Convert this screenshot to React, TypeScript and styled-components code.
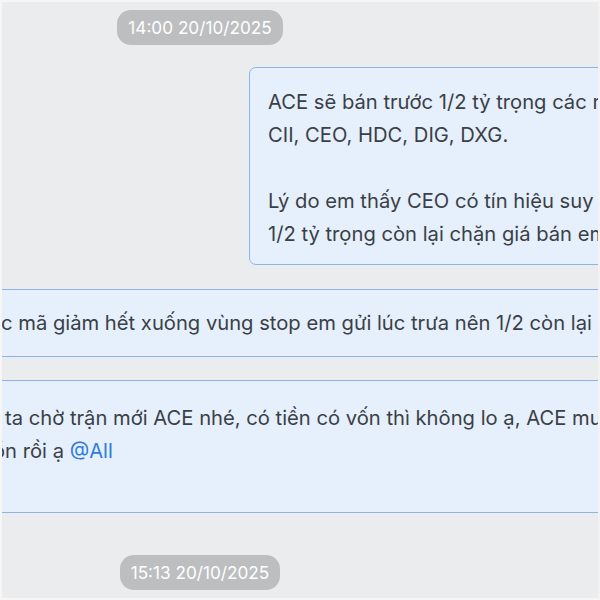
import React from "react";
import styled, { createGlobalStyle } from "styled-components";

const Global = createGlobalStyle`
  html, body { margin: 0; padding: 0; background: #ebecee; }
  body { font-family: Inter, "Noto Sans", Roboto, sans-serif; }
  * { box-sizing: border-box; }
`;

const Viewport = styled.div`
  width: 600px;
  height: 600px;
  overflow: hidden;
  background: #ebecee;
  border: 2px solid #f6f6f7;
  border-right-color: #f2f2f3;
`;

const Feed = styled.div`
  width: 1400px;
  margin-left: -502px;
  padding-top: 8px;
  display: flex;
  flex-direction: column;
  align-items: flex-start;
`;

const TimePill = styled.div<{ $top: number }>`
  align-self: center;
  margin-top: ${(p) => p.$top}px;
  height: 35px;
  padding: 0 11px;
  border-radius: 14px;
  background: #bdbec0;
  color: #ffffff;
  font-size: 17.2px;
  line-height: 35px;
  white-space: nowrap;
`;

const Bubble = styled.div<{ $left: number; $top: number; $pt: number; $pb: number }>`
  margin-left: ${(p) => p.$left}px;
  margin-top: ${(p) => p.$top}px;
  padding: ${(p) => p.$pt}px 18px ${(p) => p.$pb}px 18px;
  background: #e5f0fc;
  border: 1.5px solid #8db2ec;
  border-radius: 7px;
  color: #3b3f46;
  font-size: 20.2px;
  line-height: 33px;
  width: 900px;
`;

const Line = styled.div<{ $shift?: number }>`
  height: 33px;
  white-space: nowrap;
  margin-left: ${(p) => p.$shift ?? 0}px;
`;

const Mention = styled.span`
  color: #2f7be0;
`;

type L = { text: React.ReactNode; shift?: number };

const Message: React.FC<{ left: number; top: number; pt: number; pb: number; lines: L[] }> = ({
  left,
  top,
  pt,
  pb,
  lines,
}) => (
  <Bubble $left={left} $top={top} $pt={pt} $pb={pb}>
    {lines.map((l, i) => (
      <Line key={i} $shift={l.shift}>
        {l.text}
      </Line>
    ))}
  </Bubble>
);

export default function App() {
  return (
    <>
      <Global />
      <Viewport>
        <Feed>
          <TimePill $top={0}>14:00 20/10/2025</TimePill>
          <Message
            left={749}
            top={22}
            pt={17}
            pb={14}
            lines={[
              { text: "ACE sẽ bán trước 1/2 tỷ trọng các mã cổ phiếu:" },
              { text: "CII, CEO, HDC, DIG, DXG." },
              { text: "" },
              { text: "Lý do em thấy CEO có tín hiệu suy yếu rõ rệt," },
              { text: "1/2 tỷ trọng còn lại chặn giá bán em sẽ gửi sau." },
            ]}
          />
          <Message
            left={482}
            top={24}
            pt={16}
            pb={17}
            lines={[
              { text: "c mã giảm hết xuống vùng stop em gửi lúc trưa nên 1/2 còn lại ACE sẽ giữ." },
            ]}
          />
          <Message
            left={482}
            top={23}
            pt={20}
            pb={12}
            lines={[
              { text: "ta chờ trận mới ACE nhé, có tiền có vốn thì không lo ạ, ACE mua lại sau.", shift: 4 },
              {
                text: (
                  <>
                    ồn rồi ạ <Mention>@All</Mention>
                  </>
                ),
                shift: -8,
              },
              { text: "" },
            ]}
          />
          <TimePill $top={42}>15:13 20/10/2025</TimePill>
        </Feed>
      </Viewport>
    </>
  );
}
